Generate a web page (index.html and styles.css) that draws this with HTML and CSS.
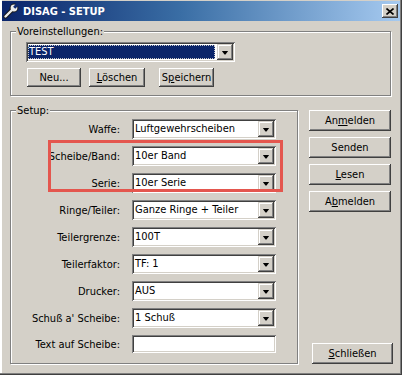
FILE: index.html
```html
<!DOCTYPE html>
<html lang="de">
<head>
<meta charset="utf-8">
<title>DISAG - SETUP</title>
<link rel="stylesheet" href="styles.css">
</head>
<body>
<div class="window">
  <div class="titlebar">
    <svg class="app-icon" width="16" height="16" viewBox="0 0 16 16">
      <path d="M2.5 13.5 L9 7" stroke="#1a1a1a" stroke-width="4.4" stroke-linecap="round"/>
      <circle cx="11" cy="5" r="4.4" fill="#1a1a1a"/>
      <path d="M2.5 13.5 L9 7" stroke="#ececec" stroke-width="2.4" stroke-linecap="round"/>
      <circle cx="11" cy="5" r="3.4" fill="#ececec"/>
      <path d="M11.2 4.8 L16 0" stroke="#0f2a70" stroke-width="3"/>
    </svg>
    <span class="title">DISAG - SETUP</span>
    <span class="close-box">
      <svg width="8" height="7" viewBox="0 0 8 7"><path d="M0.5 0.5 L7.5 6.5 M7.5 0.5 L0.5 6.5" stroke="#000" stroke-width="1.6"/></svg>
    </span>
  </div>
  <div class="client">
    <fieldset class="group presets">
      <legend>Voreinstellungen:</legend>
      <div class="presets-body">
        <div class="combo combo-presets">
          <span class="value selected"><span class="focus">TEST</span></span>
          <span class="drop"></span>
        </div>
        <div class="btn-row">
          <button class="btn btn-neu">Neu...</button>
          <button class="btn btn-loeschen"><u>L</u>öschen</button>
          <button class="btn btn-speichern">S<u>p</u>eichern</button>
        </div>
      </div>
    </fieldset>
    <fieldset class="group setup">
      <legend>Setup:</legend>
      <div class="form">
        <label>Waffe:</label>
        <div class="combo"><span class="value">Luftgewehrscheiben</span><span class="drop"></span></div>
        <label>Scheibe/Band:</label>
        <div class="combo"><span class="value">10er Band</span><span class="drop"></span></div>
        <label>Serie:</label>
        <div class="combo"><span class="value">10er Serie</span><span class="drop"></span></div>
        <label>Ringe/Teiler:</label>
        <div class="combo"><span class="value">Ganze Ringe + Teiler</span><span class="drop"></span></div>
        <label>Teilergrenze:</label>
        <div class="combo"><span class="value">100T</span><span class="drop"></span></div>
        <label>Teilerfaktor:</label>
        <div class="combo"><span class="value">TF: 1</span><span class="drop"></span></div>
        <label>Drucker:</label>
        <div class="combo"><span class="value">AUS</span><span class="drop"></span></div>
        <label>Schuß a' Scheibe:</label>
        <div class="combo"><span class="value">1 Schuß</span><span class="drop"></span></div>
        <label>Text auf Scheibe:</label>
        <div class="textfield"></div>
      </div>
    </fieldset>
    <div class="side">
      <button class="btn side-btn">An<u>m</u>elden</button>
      <button class="btn side-btn">Senden</button>
      <button class="btn side-btn"><u>L</u>esen</button>
      <button class="btn side-btn">A<u>b</u>melden</button>
      <button class="btn side-btn close-btn"><u>S</u>chließen</button>
    </div>
  </div>
  <div class="annotation"></div>
</div>
</body>
</html>
```

FILE: styles.css
```css
* { box-sizing: border-box; }

html, body {
  margin: 0;
  padding: 0;
  background: #d4d0c8;
}

body {
  font-family: "DejaVu Sans Condensed", "Liberation Sans", sans-serif;
  font-size: 11px;
  color: #000;
}

.window {
  position: relative;
  width: 402px;
  height: 375px;
  background: #d4d0c8;
  display: flex;
  flex-direction: column;
  box-shadow:
    inset -1px -1px 0 #404040,
    inset -2px -2px 0 #808080,
    inset 2px 0 0 #fff,
    inset 1px 0 0 #d4d0c8;
  overflow: hidden;
}

/* ---------- title bar ---------- */
.titlebar {
  margin: 1px 2px 0 2px;
  height: 20px;
  display: flex;
  align-items: center;
  background: linear-gradient(to right, #0a246a 0%, #3a6ea5 45%, #a6caf0 100%);
}

.app-icon {
  margin-left: 1px;
  flex: none;
}

.title {
  margin-left: 4px;
  color: #fff;
  font-weight: bold;
  font-size: 11px;
  flex: 1;
}

.close-box {
  width: 16px;
  height: 14px;
  margin-right: 2px;
  background: #d4d0c8;
  display: flex;
  align-items: center;
  justify-content: center;
  box-shadow:
    inset -1px -1px 0 #404040,
    inset 1px 1px 0 #fff,
    inset -2px -2px 0 #808080;
}

/* ---------- client area ---------- */
.client {
  padding: 4px 0 0 10px;
  display: grid;
  grid-template-columns: 288px 82px;
  grid-template-rows: 71px 260px;
  column-gap: 11px;
  row-gap: 8px;
}

.group {
  margin: 0;
  padding: 0;
  min-width: 0;
  border: 1px solid #808080;
  box-shadow: 1px 1px 0 #fff, inset 1px 1px 0 #fff;
}

.group legend {
  margin-left: 5px;
  padding: 0 1px;
  line-height: 13px;
  font-size: 11px;
  background: #d4d0c8;
}

.presets {
  grid-column: 1 / 3;
}

.presets-body {
  padding: 4px 0 0 15px;
}

.btn-row {
  display: flex;
  gap: 8px;
  margin-top: 6px;
  padding-left: 1px;
}

/* ---------- buttons ---------- */
.btn {
  font: inherit;
  color: #000;
  border: none;
  margin: 0;
  padding: 0;
  background: #d4d0c8;
  box-shadow:
    inset -1px -1px 0 #404040,
    inset 1px 1px 0 #fff,
    inset -2px -2px 0 #808080;
  height: 21px;
  text-align: center;
}

.btn u { text-decoration-thickness: 1px; text-underline-offset: 1px; }

.btn-row .btn { height: 19px; }
.btn-neu { width: 54px; }
.btn-loeschen { width: 56px; }
.btn-speichern { width: 55px; margin-left: 6px; }

.side {
  display: flex;
  flex-direction: column;
  gap: 6px;
  padding-top: 6px;
}

.side-btn { width: 82px; }

.close-btn {
  margin-top: auto;
  margin-left: 3px;
  width: 81px;
}

/* ---------- combos ---------- */
.combo {
  display: flex;
  height: 20px;
  padding: 2px;
  background: #fff;
  box-shadow:
    inset 1px 1px 0 #808080,
    inset -1px -1px 0 #fff,
    inset 2px 2px 0 #404040,
    inset -2px -2px 0 #d4d0c8;
}

.combo-presets {
  width: 209px;
}

.value {
  flex: 1;
  padding-left: 1px;
  line-height: 16px;
  white-space: nowrap;
  overflow: hidden;
}

.value.selected {
  margin: 1px 2px 1px 0;
  padding-left: 1px;
  line-height: 14px;
  background: #0a246a;
  color: #fff;
  outline: 1px dotted #c8c8c8;
  outline-offset: -1px;
}

.drop {
  flex: none;
  width: 16px;
  height: 16px;
  background: #d4d0c8;
  display: flex;
  align-items: center;
  justify-content: center;
  box-shadow:
    inset -1px -1px 0 #404040,
    inset 1px 1px 0 #d4d0c8,
    inset -2px -2px 0 #808080,
    inset 2px 2px 0 #fff;
}

.drop::after {
  content: "";
  width: 7px;
  height: 4px;
  margin-top: 1px;
  background: #000;
  clip-path: polygon(0 0, 7px 0, 4px 4px, 3px 4px);
}

/* ---------- setup form ---------- */
.form {
  display: grid;
  grid-template-columns: 109px 144px;
  column-gap: 12px;
  row-gap: 7px;
  align-items: center;
  padding-top: 2px;
}

.form label {
  text-align: right;
  white-space: nowrap;
}

.textfield {
  height: 18px;
  background: #fff;
  box-shadow:
    inset 1px 1px 0 #808080,
    inset -1px -1px 0 #fff,
    inset 2px 2px 0 #404040,
    inset -2px -2px 0 #d4d0c8;
}

/* ---------- red annotation box ---------- */
.annotation {
  position: absolute;
  left: 48px;
  top: 140px;
  width: 235px;
  height: 52px;
  border: 3px solid #e4564e;
  pointer-events: none;
}
```
